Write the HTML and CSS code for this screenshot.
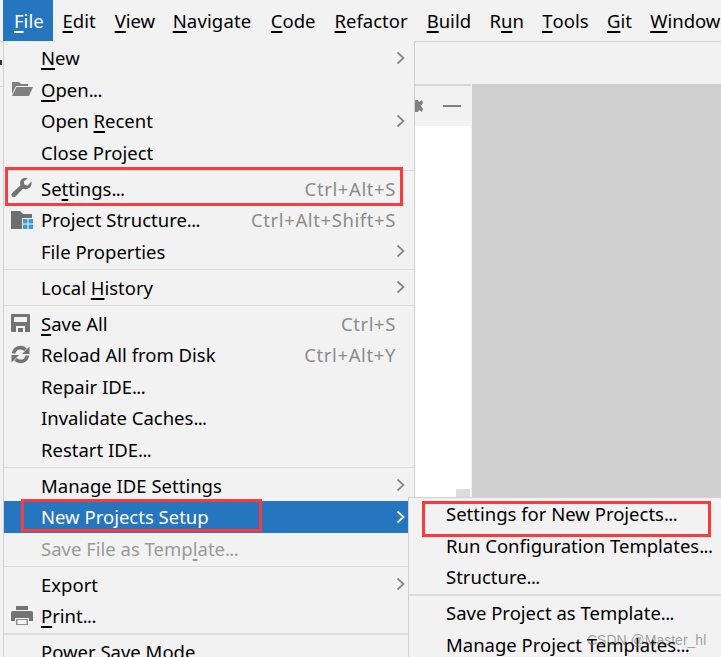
FILE: index.html
```html
<!DOCTYPE html>
<html lang="en">
<head>
<meta charset="utf-8">
<title>File menu</title>
<link rel="stylesheet" href="styles.css">
</head>
<body>
<div class="ide">
  <nav class="menubar">
    <span class="top active"><u>F</u>ile</span>
    <span class="top"><u>E</u>dit</span>
    <span class="top"><u>V</u>iew</span>
    <span class="top nav"><u>N</u>avigate</span>
    <span class="top"><u>C</u>ode</span>
    <span class="top"><u>R</u>efactor</span>
    <span class="top tight"><u>B</u>uild</span>
    <span class="top tight">R<u>u</u>n</span>
    <span class="top tight"><u>T</u>ools</span>
    <span class="top tight"><u>G</u>it</span>
    <span class="top"><u>W</u>indow</span>
  </nav>
  <div class="toolbar"><span class="gutter-tick"></span></div>
  <div class="workspace">
    <div class="gutter"><span class="gutter-line"></span></div>
    <div class="panel">
      <div class="panel-head">
        <svg class="panel-gear" width="8" height="14" viewBox="0 0 8 14"><path d="M0 1h3l1 2 3-2 1 3-2 3 2 3-1 3-3-2-1 2H0z" fill="#808080"/></svg>
        <span class="panel-min"></span>
      </div>
      <div class="panel-body"></div>
    </div>
    <div class="canvas"></div>
  </div>
</div>

<div class="menu main-menu">
  <div class="row"><span class="ico"></span><span class="label"><u>N</u>ew</span><svg class="chev" width="9" height="14" viewBox="0 0 9 14"><path d="M1.500 1.500 7.500 7l-6 5.500" fill="none" stroke="#858585" stroke-width="1.700"/></svg></div>
  <div class="row"><span class="ico"><svg width="22" height="18" viewBox="0 0 22 18"><path d="M1 2h7l2 2h7v2H5L1 14z" fill="#808080"/><path d="M5.500 7H22l-4 9H1z" fill="#808080"/></svg></span><span class="label"><u>O</u>pen<span class="dots">...</span></span></div>
  <div class="row"><span class="ico"></span><span class="label">Open <u>R</u>ecent</span><svg class="chev" width="9" height="14" viewBox="0 0 9 14"><path d="M1.500 1.500 7.500 7l-6 5.500" fill="none" stroke="#858585" stroke-width="1.700"/></svg></div>
  <div class="row"><span class="ico"></span><span class="label">Close Project</span></div>
  <div class="sep"></div>
  <div class="row"><span class="ico"><svg width="22" height="20" viewBox="0 0 22 20"><path d="M20.500 3.500l-4 4-3-.8-.8-3 4-3.700c-3-.8-6.200.4-7.200 3-.6 1.500-.5 3 0 4.300L1.200 15c-1 1-1 2.400 0 3.400 1 1 2.400 1 3.400 0l7.300-7.600c1.500.6 3.200.6 4.800 0 2.800-1.200 4.500-4.200 3.800-7.300z" fill="#737373"/></svg></span><span class="label">Se<u>t</u>tings<span class="dots">...</span></span><span class="keys">Ctrl+Alt+S</span></div>
  <div class="row"><span class="ico"><svg width="23" height="20" viewBox="0 0 23 20"><path d="M0 1h9l3 3h9v4H11v11H0z" fill="#6e6e6e"/><path d="M12 9h4.500v4.500H12zM17.500 9H22v4.500h-4.500zM12 14.500h4.500V19H12zM17.500 14.500H22V19h-4.500z" fill="#3d9ad6"/></svg></span><span class="label">Project Structure<span class="dots">...</span></span><span class="keys">Ctrl+Alt+Shift+S</span></div>
  <div class="row"><span class="ico"></span><span class="label">File Properties</span><svg class="chev" width="9" height="14" viewBox="0 0 9 14"><path d="M1.500 1.500 7.500 7l-6 5.500" fill="none" stroke="#858585" stroke-width="1.700"/></svg></div>
  <div class="sep"></div>
  <div class="row"><span class="ico"></span><span class="label">Local <u>H</u>istory</span><svg class="chev" width="9" height="14" viewBox="0 0 9 14"><path d="M1.500 1.500 7.500 7l-6 5.500" fill="none" stroke="#858585" stroke-width="1.700"/></svg></div>
  <div class="sep"></div>
  <div class="row"><span class="ico"><svg width="19" height="18" viewBox="0 0 19 18"><path fill-rule="evenodd" d="M1 0h17a1 1 0 0 1 1 1v17H1a1 1 0 0 1-1-1V1a1 1 0 0 1 1-1zM3 3v5h13V3zM5 12v6h9v-6z" fill="#737373"/><path d="M7 14h5v4H7z" fill="#737373"/></svg></span><span class="label"><u>S</u>ave All</span><span class="keys">Ctrl+S</span></div>
  <div class="row"><span class="ico"><svg width="19" height="19" viewBox="0 0 19 19"><path d="M2.500 8.500C3.200 5 6 2.600 9.500 2.600c2 0 3.700.8 5 2" fill="none" stroke="#737373" stroke-width="3.600"/><path d="M11 9h7.500V1.500z" fill="#737373"/><path d="M16.500 10.500c-.7 3.500-3.500 5.900-7 5.900-2 0-3.700-.8-5-2" fill="none" stroke="#737373" stroke-width="3.600"/><path d="M8 10H.5v7.500z" fill="#737373"/></svg></span><span class="label">Reload All from Disk</span><span class="keys">Ctrl+Alt+Y</span></div>
  <div class="row"><span class="ico"></span><span class="label">Repair IDE<span class="dots">...</span></span></div>
  <div class="row"><span class="ico"></span><span class="label">Invalidate Caches<span class="dots">...</span></span></div>
  <div class="row"><span class="ico"></span><span class="label">Restart IDE<span class="dots">...</span></span></div>
  <div class="sep"></div>
  <div class="row"><span class="ico"></span><span class="label">Manage IDE Settings</span><svg class="chev" width="9" height="14" viewBox="0 0 9 14"><path d="M1.500 1.500 7.500 7l-6 5.500" fill="none" stroke="#858585" stroke-width="1.700"/></svg></div>
  <div class="row selected"><span class="ico"></span><span class="label">New Projects Setup</span><svg class="chev" width="9" height="14" viewBox="0 0 9 14"><path d="M1.500 1.500 7.500 7l-6 5.500" fill="none" stroke="#ffffff" stroke-width="1.700"/></svg></div>
  <div class="row disabled"><span class="ico"></span><span class="label">Save File as Temp<u>l</u>ate<span class="dots">...</span></span></div>
  <div class="sep"></div>
  <div class="row"><span class="ico"></span><span class="label">Export</span><svg class="chev" width="9" height="14" viewBox="0 0 9 14"><path d="M1.500 1.500 7.500 7l-6 5.500" fill="none" stroke="#858585" stroke-width="1.700"/></svg></div>
  <div class="row"><span class="ico"><svg width="22" height="20" viewBox="0 0 22 20"><path d="M5 0h12v4H5z" fill="#737373"/><path fill-rule="evenodd" d="M2 5h18a2 2 0 0 1 2 2v8h-4v-3H4v3H0V7a2 2 0 0 1 2-2z" fill="#737373"/><path d="M5 13h12v6H5z" fill="#8f8f8f"/><path d="M6.500 14h9v4h-9z" fill="#f2f2f2"/></svg></span><span class="label"><u>P</u>rint<span class="dots">...</span></span></div>
  <div class="sep thick"></div>
  <div class="row"><span class="ico"></span><span class="label">Power Save Mode</span></div>
</div>

<div class="tab-stub"></div>

<div class="menu sub-menu">
  <div class="row"><span class="label">Settings for New Projects<span class="dots">...</span></span></div>
  <div class="row"><span class="label">Run Configuration Templates<span class="dots">...</span></span></div>
  <div class="row"><span class="label">Structure<span class="dots">...</span></span></div>
  <div class="sep thick"></div>
  <div class="row"><span class="label">Save Project as Template<span class="dots">...</span></span></div>
  <div class="row"><span class="label">Manage Project Templates<span class="dots">...</span></span></div>
</div>

<div class="mark mark-settings"></div>
<div class="mark mark-setup"></div>
<div class="mark mark-new"></div>
<div class="watermark">CSDN @Master_hl</div>
</body>
</html>
```

FILE: styles.css
```css
* { box-sizing: border-box; }
html, body { margin: 0; height: 100%; overflow: hidden; }
body {
  position: relative;
  background: #f2f2f2;
  color: #000;
  font-family: "Noto Sans", sans-serif;
  font-size: 18.5px;
}
u {
  text-decoration-thickness: 2px;
  text-underline-offset: 3px;
  text-decoration-skip-ink: none;
}
.dots { letter-spacing: -0.6px; }

.ide { display: flex; flex-direction: column; height: 100%; }
.menubar {
  display: flex;
  flex: none;
  height: 42px;
  padding: 0 0 0 3px;
  border-bottom: 1px solid #d4d4d4;
  white-space: nowrap;
  overflow: hidden;
}
.top { display: flex; align-items: center; padding: 0 9.5px; }
.top.active { background: #2675bf; color: #fff; width: 50px; padding-left: 11px; }
.top.nav { margin-left: -1.5px; letter-spacing: 0.15px; margin-right: 0.5px; }
.top.tight { padding: 0 8.9px 0 9.5px; }

.toolbar { flex: none; height: 42px; position: relative; }
.gutter-tick { position: absolute; left: 0; top: 18px; width: 2px; height: 5px; background: #303030; }

.workspace { display: flex; flex: 1; min-height: 0; }
.gutter { width: 414px; flex: none; }
.gutter-line { display: block; width: 3px; height: 1px; margin-top: 2px; background: #d6d6d6; }
.panel { width: 57px; flex: none; display: flex; flex-direction: column; border-top: 2px solid #d6d6d6; }
.panel-head { height: 40px; flex: none; display: flex; align-items: center; justify-content: space-between; padding: 0 10px 0 1px; }
.panel-min { width: 18px; height: 2px; background: #808080; }
.panel-body { flex: 1; background: #fff; }
.canvas { flex: 1; margin-left: 1px; background: #d0d0d0; }

.menu {
  position: absolute;
  overflow: hidden;
  background: #f2f2f2;
  white-space: nowrap;
}
.main-menu {
  left: 3px; top: 41px; bottom: 0; width: 412px;
  padding-top: 1px;
  border-left: 1px solid #cfcfcf;
  border-right: 1px solid #cfcfcf;
}
.sub-menu {
  left: 408px; top: 497px; right: 0; bottom: 0;
  border-left: 1px solid #cfcfcf;
  border-top: 1px solid #cfcfcf;
}
.row {
  display: flex;
  align-items: center;
  height: 31.5px;
  padding-right: 9px;
}
.row .ico { width: 37px; flex: none; display: flex; padding-left: 7px; }
.row .label { flex: 1; }
.sub-menu .row .label { padding-left: 37px; }
.keys { color: #8c8c8c; margin-right: 9px; letter-spacing: 0.6px; }
.chev { flex: none; }
.selected { background: #2675bf; color: #fff; }
.disabled { color: #9a9a9a; }
.sep { height: 4.5px; display: flex; align-items: center; }
.sep::after { content: ""; flex: 1; height: 1px; background: #dcdcdc; }
.sep.thick::after { height: 2px; }

.tab-stub {
  position: absolute;
  left: 456px; top: 489px;
  width: 14px; height: 9px;
  background: #dcdcdc;
}
.mark { position: absolute; border: 3px solid #f83b3e; }
.mark-settings { left: 5px; top: 167px; width: 398px; height: 39px; }
.mark-setup { left: 21px; top: 499px; width: 241px; height: 33px; }
.mark-new { left: 422px; top: 501px; width: 289px; height: 36px; }
.watermark {
  position: absolute;
  left: 587px; top: 632px;
  font-family: "Liberation Sans", sans-serif;
  font-size: 14px;
  color: rgba(90, 90, 90, 0.55);
}
```
